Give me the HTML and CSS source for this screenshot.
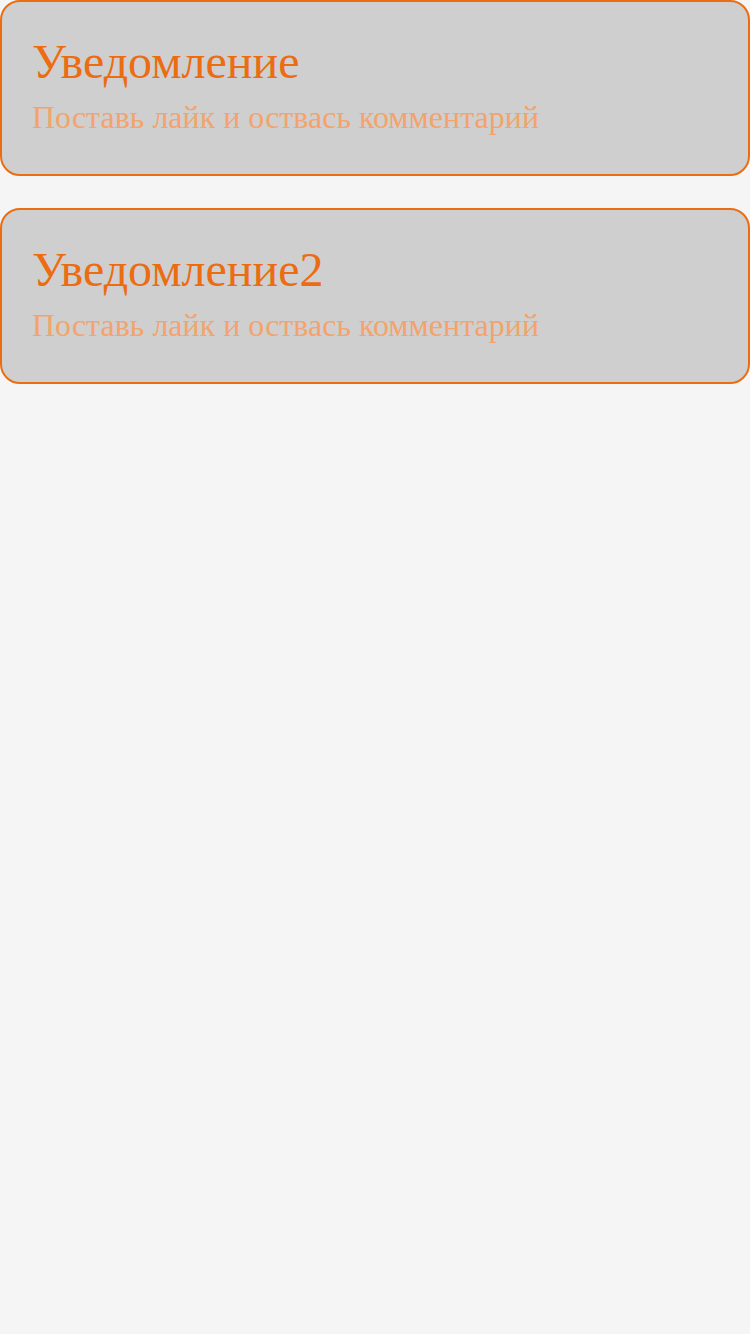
FILE: index.html
```html
<!DOCTYPE html>
<html lang="ru">
<head>
<meta charset="utf-8">
<link rel="stylesheet" href="styles.css">
</head>
<body>
<div class="list">
  <div class="card">
    <div class="title">Уведомление</div>
    <div class="text">Поставь лайк и оствась комментарий</div>
  </div>
  <div class="card">
    <div class="title">Уведомление2</div>
    <div class="text">Поставь лайк и оствась комментарий</div>
  </div>
</div>
</body>
</html>
```
FILE: styles.css
```css
html, body {
  margin: 0;
  padding: 0;
  background: #f5f5f5;
  height: 100%;
}
body {
  font-family: "Liberation Serif", "Times New Roman", serif;
}
.list {
  display: flex;
  flex-direction: column;
  gap: 32px;
}
.card {
  background: #cfcfcf;
  border: 2px solid #ec6c12;
  border-radius: 20px;
  padding: 33px 30px 0;
  height: 176px;
  box-sizing: border-box;
}
.title {
  font-size: 48px;
  line-height: 53px;
  color: #ec6c12;
  margin-bottom: 12px;
}
.text {
  font-size: 32px;
  line-height: 35px;
  color: #f3a36b;
}
```
